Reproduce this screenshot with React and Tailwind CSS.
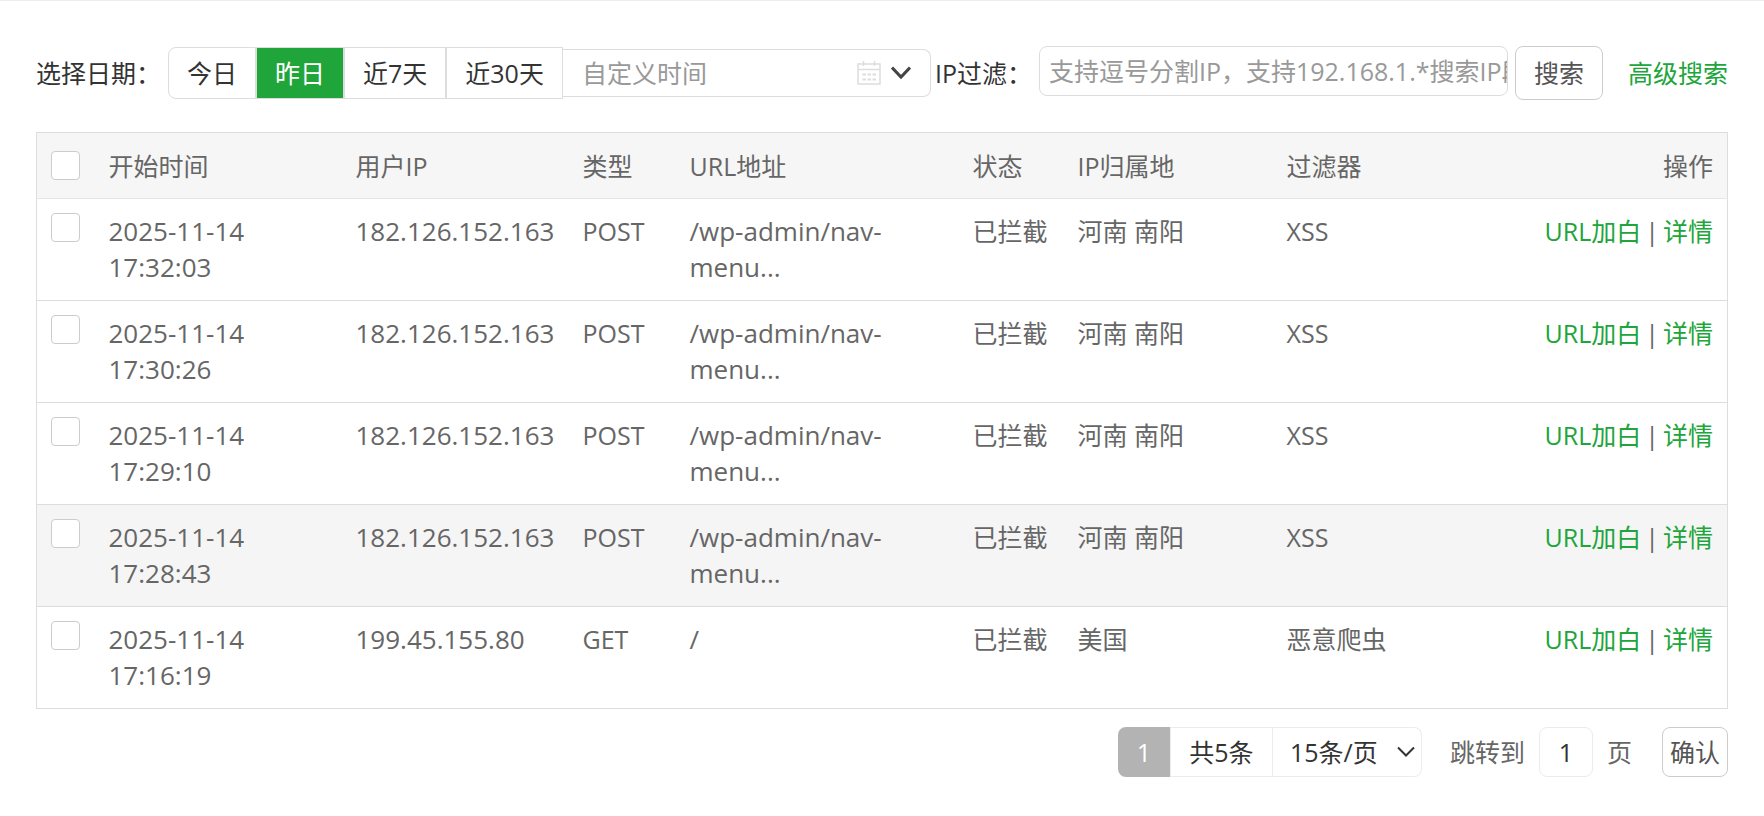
import { useState } from 'react';

const ranges = ['今日', '昨日', '近7天', '近30天'];

const columns = [
  { title: '开始时间', width: 'w-[247px]' },
  { title: '用户IP', width: 'w-[227px]' },
  { title: '类型', width: 'w-[107px]' },
  { title: 'URL地址', width: 'w-[283px]' },
  { title: '状态', width: 'w-[105px]' },
  { title: 'IP归属地', width: 'w-[209px]' },
  { title: '过滤器', width: 'w-[209px]' },
];

const logs = [
  { time: '2025-11-14 17:32:03', ip: '182.126.152.163', method: 'POST', url: '/wp-admin/nav-menu...', status: '已拦截', region: '河南 南阳', filter: 'XSS' },
  { time: '2025-11-14 17:30:26', ip: '182.126.152.163', method: 'POST', url: '/wp-admin/nav-menu...', status: '已拦截', region: '河南 南阳', filter: 'XSS' },
  { time: '2025-11-14 17:29:10', ip: '182.126.152.163', method: 'POST', url: '/wp-admin/nav-menu...', status: '已拦截', region: '河南 南阳', filter: 'XSS' },
  { time: '2025-11-14 17:28:43', ip: '182.126.152.163', method: 'POST', url: '/wp-admin/nav-menu...', status: '已拦截', region: '河南 南阳', filter: 'XSS', highlighted: true },
  { time: '2025-11-14 17:16:19', ip: '199.45.155.80', method: 'GET', url: '/', status: '已拦截', region: '美国', filter: '恶意爬虫' },
];

const CalendarIcon = () => (
  <svg width="24" height="24" viewBox="0 0 24 24" fill="none" stroke="#dddddd">
    <rect x="1" y="3" width="22" height="20" strokeWidth="1.5" />
    <path d="M1 8.500h22" strokeWidth="1.5" />
    <path d="M6.500 0v5M17.500 0v5" strokeWidth="1.5" />
    <path d="M5.500 13.500h13.500M5.500 18.500h13.500" strokeWidth="2" strokeDasharray="3.500 1.500" />
  </svg>
);

const Checkbox = ({ label, checked, onChange }) => (
  <input
    type="checkbox"
    aria-label={label}
    checked={checked}
    onChange={onChange}
    className="block w-[29px] h-[29px] appearance-none rounded border border-[#cccccc] bg-white checked:bg-[#20a53a]"
  />
);

const Toolbar = () => {
  const [range, setRange] = useState('昨日');

  return (
    <div className="flex items-center text-[#333333]">
      <span className="w-[132px] shrink-0 whitespace-nowrap">选择日期：</span>
      <div className="flex shrink-0">
        {ranges.map((item) => (
          <button
            key={item}
            type="button"
            onClick={() => setRange(item)}
            className={`h-[52px] px-[18px] border border-[#dddddd] whitespace-nowrap first:rounded-l-lg ${
              item === range ? 'bg-[#20a53a] text-white' : 'bg-white'
            }`}
          >
            {item}
          </button>
        ))}
      </div>
      <div className="relative w-[368px] shrink-0">
        <input
          type="text"
          aria-label="自定义时间"
          placeholder="自定义时间"
          className="block w-full h-12 pl-[19px] pr-20 border border-l-0 border-[#dddddd] rounded-r-lg placeholder:text-[#999999]"
        />
        <div className="absolute inset-y-0 right-5 flex items-center gap-2.5 pointer-events-none">
          <CalendarIcon />
          <svg width="20" height="14" viewBox="0 0 20 14" fill="none" stroke="#444444" strokeWidth="3">
            <path d="M1 1.500l9 9.500 9-9.500" />
          </svg>
        </div>
      </div>
      <label htmlFor="ip-filter" className="ml-1 w-[104px] shrink-0 whitespace-nowrap">IP过滤：</label>
      <input
        id="ip-filter"
        type="text"
        placeholder="支持逗号分割IP，支持192.168.1.*搜索IP段"
        className="h-[50px] min-w-0 flex-1 -mt-1 pl-[9px] border border-[#dddddd] rounded-lg placeholder:text-[#999999]"
      />
      <button type="button" className="ml-[7px] h-[54px] px-[18px] shrink-0 border border-[#cccccc] rounded-lg text-[#555555]">
        搜索
      </button>
      <a href="#" className="ml-[25px] shrink-0 text-[#20a53a]">高级搜索</a>
    </div>
  );
};

const LogTable = () => {
  const [selected, setSelected] = useState([]);

  const toggle = (time) => {
    setSelected(selected.includes(time) ? selected.filter((t) => t !== time) : [...selected, time]);
  };

  const toggleAll = () => {
    setSelected(selected.length === logs.length ? [] : logs.map((log) => log.time));
  };

  return (
    <table className="mt-8 w-full table-fixed border-collapse border border-[#dddddd] text-left text-[#666666]">
      <thead>
        <tr className="h-[66px] bg-[#f6f6f6] border-b border-[#e6e6e6]">
          <th className="w-[58px] px-3.5 font-normal">
            <Checkbox label="全选" checked={selected.length === logs.length} onChange={toggleAll} />
          </th>
          {columns.map((col) => (
            <th key={col.title} className={`${col.width} px-3.5 font-normal`}>{col.title}</th>
          ))}
          <th className="px-3.5 text-right font-normal">操作</th>
        </tr>
      </thead>
      <tbody>
        {logs.map((log) => (
          <tr
            key={log.time}
            className={`h-[102px] align-top border-b border-[#dddddd] ${log.highlighted ? 'bg-[#f5f5f5]' : ''}`}
          >
            <td className="px-3.5 py-[14px]">
              <Checkbox label={log.time} checked={selected.includes(log.time)} onChange={() => toggle(log.time)} />
            </td>
            <td className="px-3.5 py-[14px] text-[26px] leading-9">{log.time}</td>
            <td className="px-3.5 py-[14px] text-[26px] leading-9">{log.ip}</td>
            <td className="px-3.5 py-[14px]">{log.method}</td>
            <td className="px-3.5 py-[14px] text-[26px] leading-9">{log.url}</td>
            <td className="px-3.5 py-[14px] whitespace-nowrap">{log.status}</td>
            <td className="px-3.5 py-[14px]">{log.region}</td>
            <td className="px-3.5 py-[14px]">{log.filter}</td>
            <td className="px-3.5 py-[14px] text-right whitespace-nowrap">
              <a href="#" className="text-[#20a53a]">URL加白</a>
              <span className="mx-1">|</span>
              <a href="#" className="text-[#20a53a]">详情</a>
            </td>
          </tr>
        ))}
      </tbody>
    </table>
  );
};

const Pagination = () => (
  <div className="mt-[18px] flex items-center justify-end text-[#333333]">
    <div className="flex h-[50px]">
      <span className="w-[52px] flex items-center justify-center rounded-l-lg bg-[#b3b3b3] text-white">1</span>
      <span className="w-[103px] flex items-center justify-center border border-[#ececec]">共5条</span>
      <div className="relative">
        <select
          aria-label="每页条数"
          className="block h-full w-[149px] pl-[17px] appearance-none border border-l-0 border-[#ececec] rounded-r-lg bg-white"
        >
          <option>15条/页</option>
          <option>30条/页</option>
          <option>50条/页</option>
        </select>
        <svg
          width="18"
          height="12"
          viewBox="0 0 18 12"
          fill="none"
          stroke="#333333"
          strokeWidth="2"
          className="absolute right-[7px] top-[19px] pointer-events-none"
        >
          <path d="M1 1.500l8 8 8-8" />
        </svg>
      </div>
    </div>
    <label htmlFor="page" className="ml-7 text-[#666666]">跳转到</label>
    <input
      id="page"
      type="text"
      defaultValue="1"
      className="mx-3.5 h-[50px] w-[54px] border border-[#ececec] rounded-lg text-center"
    />
    <span className="text-[#666666]">页</span>
    <button type="button" className="ml-[30px] h-[50px] w-[66px] border border-[#cccccc] rounded-lg text-[#555555]">
      确认
    </button>
  </div>
);

const App = () => (
  <div className="min-h-screen border-t border-[#eeeeee] bg-white px-9 pt-[45px] pb-10 font-['Open_Sans','Noto_Sans_CJK_SC',sans-serif] text-[25px] leading-9">
    <Toolbar />
    <LogTable />
    <Pagination />
  </div>
);

export default App;
